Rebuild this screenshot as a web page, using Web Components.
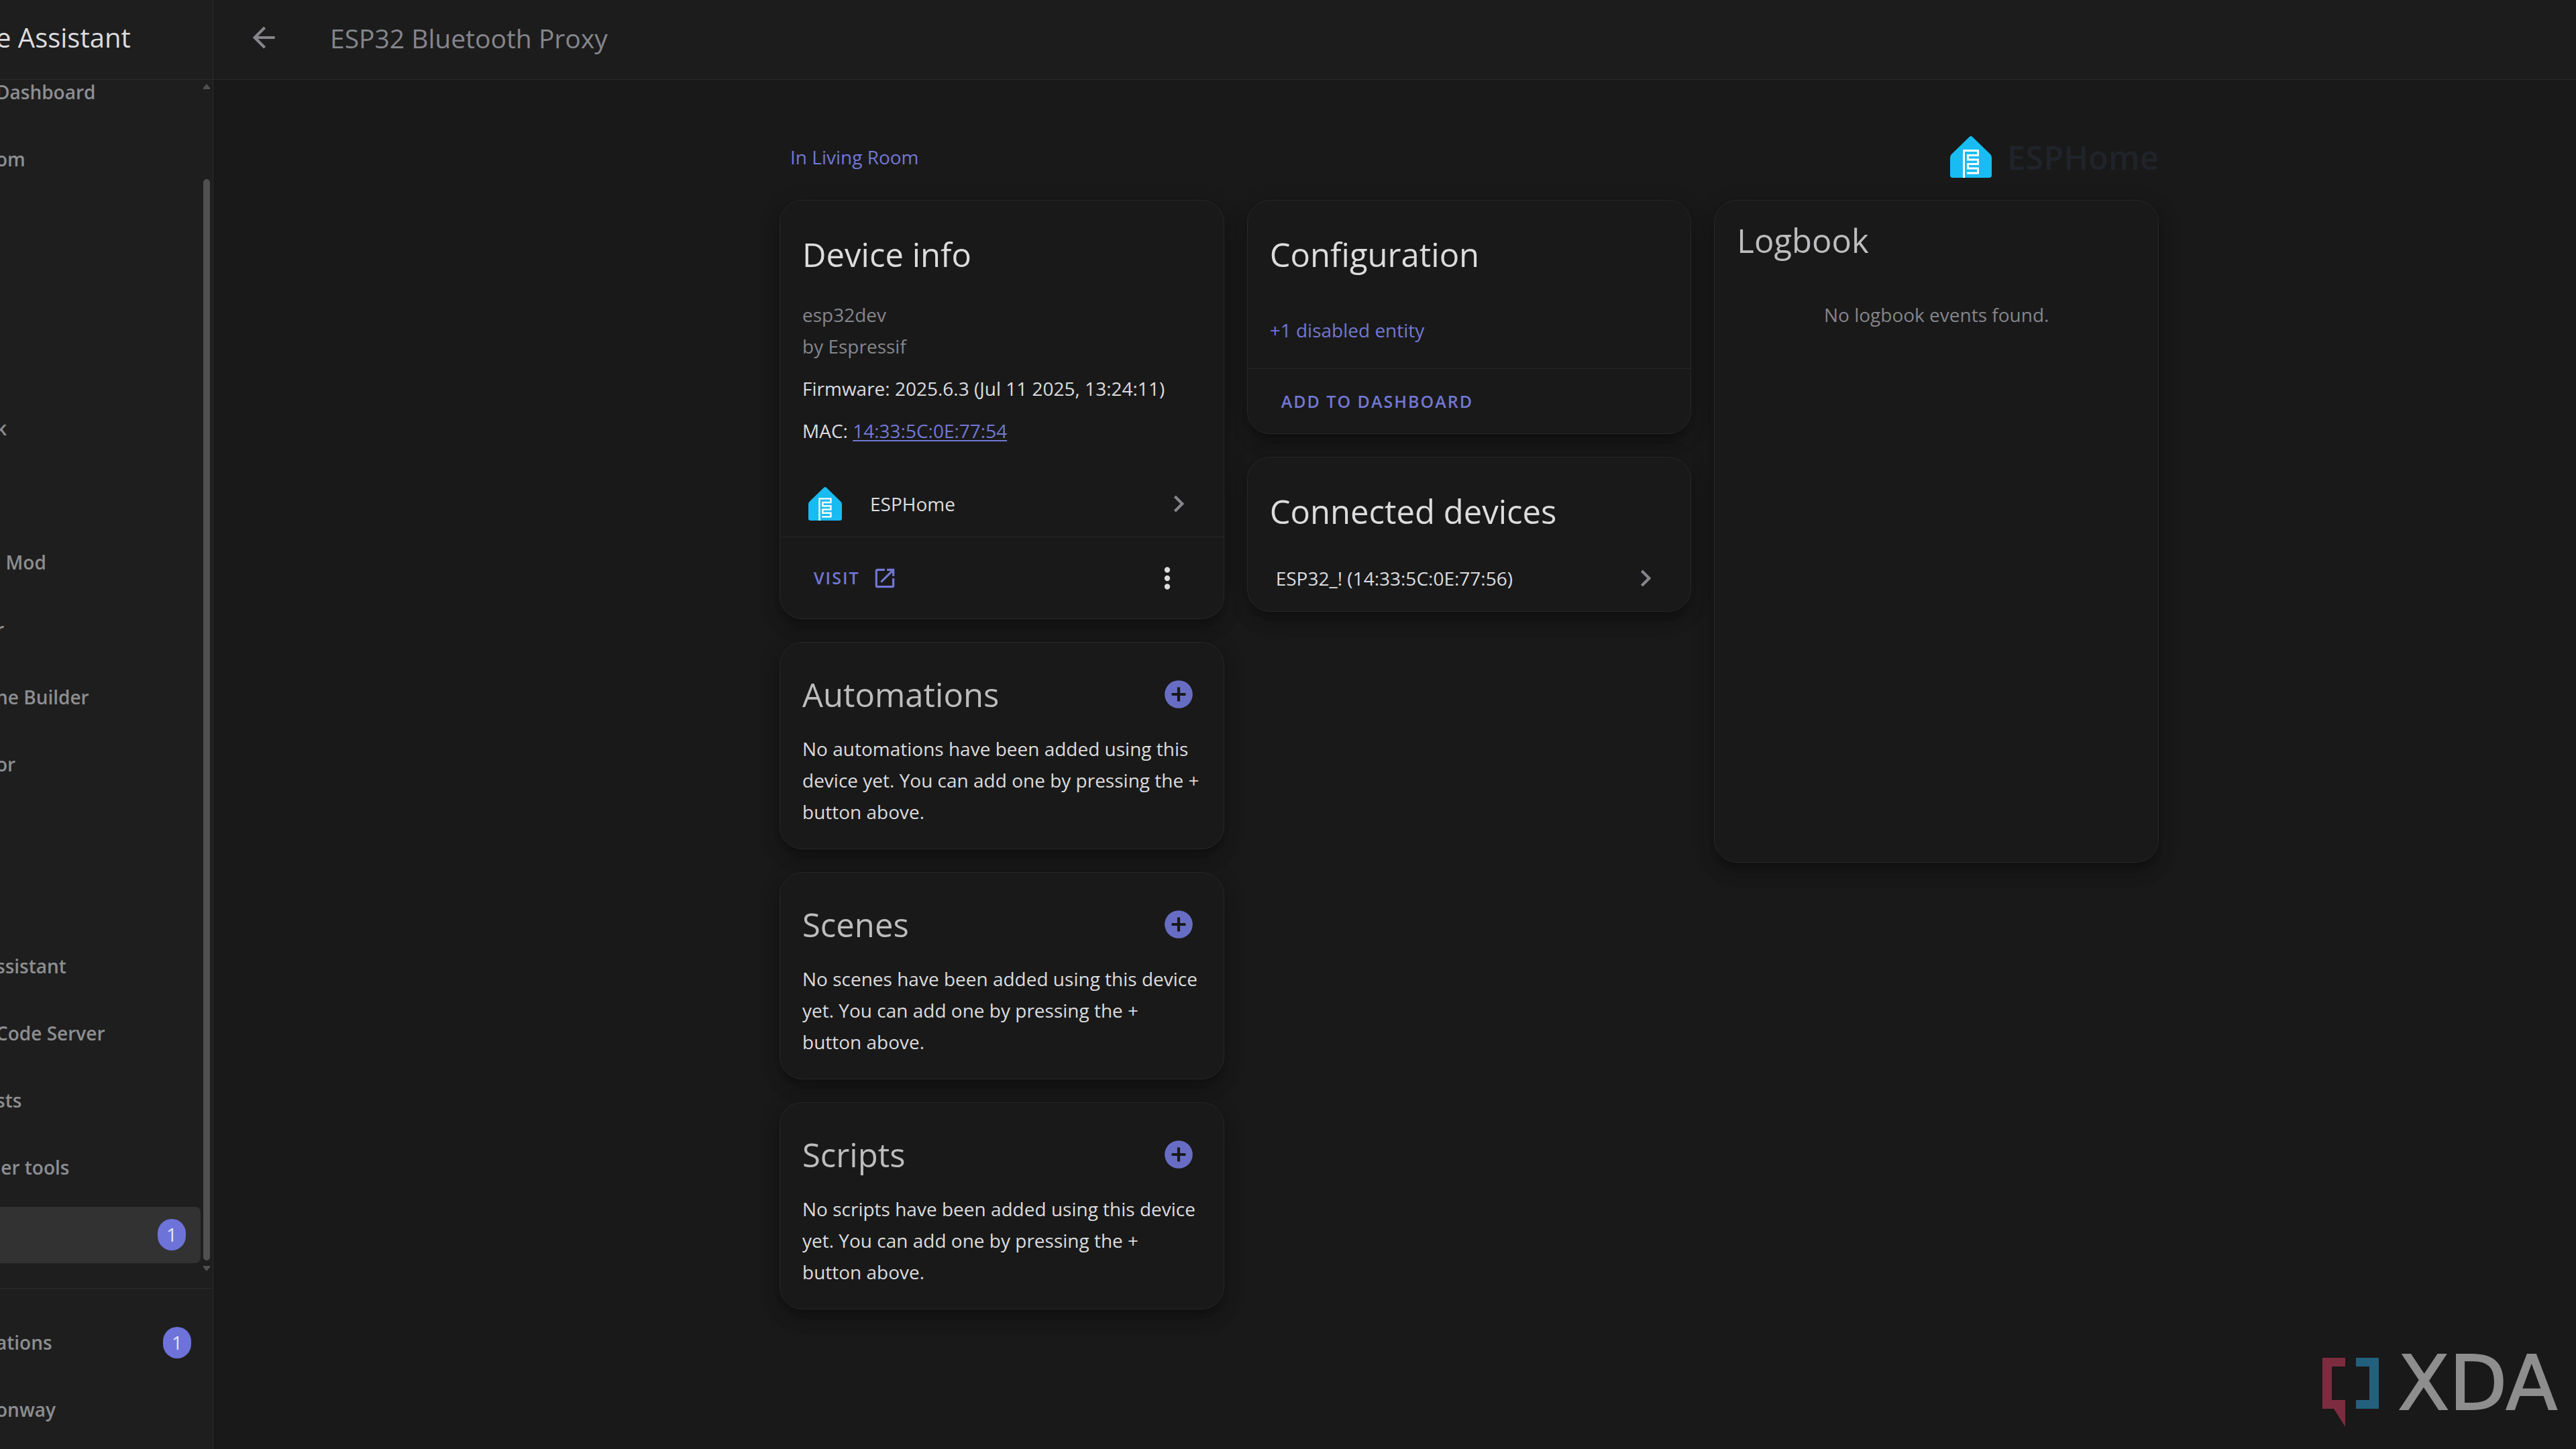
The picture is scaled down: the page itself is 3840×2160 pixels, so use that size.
<!DOCTYPE html>
<html lang="en">
<head>
<meta charset="utf-8">
<title>ESP32 Bluetooth Proxy</title>
<style>
  html, body {
    height: 100%;
    margin: 0;
  }
  body {
    --primary: #7277d4;
    --primary-text: #dcdcde;
    --secondary-text: #85858b;
    --divider: #2a2a2a;
    --card-border: #272727;
    background: #191919;
    color: var(--primary-text);
    font: 28px/47px "Open Sans", "Noto Sans", sans-serif;
  }
</style>
</head>
<body>
<ha-app></ha-app>

<script>
const icons = {
  back: 'M20,11V13H8L13.5,18.5L12.08,19.92L4.16,12L12.08,4.08L13.5,5.5L8,11H20Z',
  chevron: 'M8.59,16.58L13.17,12L8.59,7.41L10,6L16,12L10,18L8.59,16.58Z',
  open: 'M14,3V5H17.59L7.76,14.83L9.17,16.24L19,6.41V10H21V3M19,19H5V5H12V3H5C3.89,3 3,3.9 3,5V19A2,2 0 0,0 5,21H19A2,2 0 0,0 21,19V12H19V19Z',
  dots: 'M12,16A2,2 0 0,1 14,18A2,2 0 0,1 12,20A2,2 0 0,1 10,18A2,2 0 0,1 12,16M12,10A2,2 0 0,1 14,12A2,2 0 0,1 12,14A2,2 0 0,1 10,12A2,2 0 0,1 12,10M12,4A2,2 0 0,1 14,6A2,2 0 0,1 12,8A2,2 0 0,1 10,6A2,2 0 0,1 12,4Z',
  plus: 'M17,13H13V17H11V13H7V11H11V7H13V11H17M12,2A10,10 0 0,0 2,12A10,10 0 0,0 12,22A10,10 0 0,0 22,12A10,10 0 0,0 12,2Z',
}

class BaseElement extends HTMLElement {
  connectedCallback () {
    if (this.shadowRoot) {
      return
    }
    this.attachShadow({ mode: 'open' })
    const template = document.createElement('template')
    template.innerHTML = `<style>* { box-sizing: border-box; } a { color: inherit; text-decoration: none; }</style>${this.render()}`
    this.shadowRoot.appendChild(template.content.cloneNode(true))
  }
}

class HaIcon extends BaseElement {
  render () {
    return `
      <style>
        :host { display: block; width: 50px; height: 50px; flex: none; }
        svg { display: block; width: 100%; height: 100%; fill: currentColor; }
      </style>
      <svg viewBox="0 0 24 24" aria-hidden="true"><path d="${icons[this.getAttribute('name')]}"/></svg>
    `
  }
}

class EsphomeLogo extends BaseElement {
  render () {
    return `
      <style>
        :host { display: block; width: 62px; height: 62px; flex: none; }
        svg { display: block; width: 100%; height: 100%; }
      </style>
      <svg viewBox="0 0 62 62" aria-hidden="true">
        <path fill="#18bcf2" d="M28.5 1.2Q31 -1 33.5 1.2L60 27Q62 29 62 32V58Q62 62 58 62H4Q0 62 0 58V32Q0 29 2 27Z"/>
        <path fill="none" stroke="#fff" stroke-width="3" d="M20.5 62V21.5H41.5V28.5H26.5V35H41.5V41.5H26.5V48H41.5V55H25"/>
      </svg>
    `
  }
}

class HaBadge extends BaseElement {
  render () {
    return `
      <style>
        :host {
          display: grid;
          place-items: center;
          width: 42px;
          height: 47px;
          border-radius: 21px;
          background: #6d73d9;
          color: #e3e3fa;
          font-weight: 400;
        }
      </style>
      <span><slot></slot></span>
    `
  }
}

class NavItem extends BaseElement {
  render () {
    return `
      <style>
        :host { display: block; }
        a {
          display: flex;
          align-items: center;
          justify-content: space-between;
          height: 84px;
          padding-right: 22px;
          color: #8d8e91;
          font-weight: 600;
        }
        .label { white-space: pre; }
        :host([selected]) a { background: #323232; border-radius: 0 8px 8px 0; }
      </style>
      <a href="#"><span class="label">${this.getAttribute('label') || ''}</span><slot></slot></a>
    `
  }
}

class HaSidebar extends BaseElement {
  render () {
    const labels = ['Dashboard', 'om', '', '', '', 'k', '', '  Mod', 'r', 'ne Builder', 'or', '', '', 'ssistant', 'Code Server', 'sts', ' er tools']
    return `
      <style>
        :host {
          display: flex;
          flex-direction: column;
          flex: none;
          width: 324px;
          margin-left: -6px;
          background: #1e1e1e;
          border-right: 1px solid var(--divider);
          box-sizing: content-box;
        }
        .title {
          height: 119px;
          line-height: 112px;
          border-bottom: 1px solid var(--divider);
          font-size: 40px;
          white-space: nowrap;
        }
        .body { flex: 1; display: flex; gap: 4px; min-height: 0; overflow: hidden; }
        nav {
          flex: 1;
          display: flex;
          flex-direction: column;
          justify-content: space-between;
          margin-top: -24px;
          padding-bottom: 37px;
        }
        .scrollbar {
          display: flex;
          flex-direction: column;
          width: 10px;
          margin-right: 4px;
          padding: 6px 0 25px;
        }
        .scrollbar svg { display: block; width: 10px; height: 8px; fill: #505050; }
        .thumb { flex: 1; margin: 134px 0 8px; border-radius: 5px; background: #505050; }
        .footer {
          display: flex;
          flex-direction: column;
          gap: 16px;
          height: 240px;
          padding: 38px 10px 0 0;
          border-top: 1px solid var(--divider);
        }
      </style>
      <div class="title">e Assistant</div>
      <div class="body">
        <nav>
          ${labels.map(label => `<nav-item label="${label}"></nav-item>`).join('')}
          <nav-item selected><ha-badge>1</ha-badge></nav-item>
        </nav>
        <div class="scrollbar">
          <svg viewBox="0 0 10 8"><path d="M5 0L10 6V8H0V6Z"/></svg>
          <div class="thumb"></div>
          <svg viewBox="0 0 10 8"><path d="M5 8L10 2V0H0V2Z"/></svg>
        </div>
      </div>
      <div class="footer">
        <nav-item label="ations"><ha-badge>1</ha-badge></nav-item>
        <nav-item label="onway"></nav-item>
      </div>
    `
  }
}

class HaToolbar extends BaseElement {
  render () {
    return `
      <style>
        :host {
          display: flex;
          align-items: center;
          gap: 74px;
          height: 119px;
          box-sizing: border-box;
          padding: 0 50px 6px;
          background: #1c1c1c;
          border-bottom: 1px solid var(--divider);
          color: var(--secondary-text);
        }
        button { padding: 0; border: 0; background: none; color: inherit; }
        h1 { margin: 0; font-size: 39px; font-weight: 400; }
      </style>
      <button aria-label="Back"><ha-icon name="back"></ha-icon></button>
      <h1><slot></slot></h1>
    `
  }
}

class HaCard extends BaseElement {
  render () {
    return `
      <style>
        :host {
          display: block;
          background: #191919;
          border: 1px solid var(--card-border);
          border-radius: 34px;
          box-shadow: 0 17px 21px 2px rgba(0, 0, 0, .14), 0 6px 30px 4px rgba(0, 0, 0, .12), 0 10px 10px -6px rgba(0, 0, 0, .2);
        }
        header {
          display: flex;
          align-items: center;
          justify-content: space-between;
          padding: 48px 42px 0 33px;
        }
        h2 { margin: 0; font-size: 49px; line-height: 64px; font-weight: 400; }
        :host([variant]) h2 { color: #bdbdbf; }
        :host([variant="related"]) header { padding-top: 45px; }
        :host([variant="logbook"]) header { padding-top: 27px; }
        ::slotted([slot="action"]) { display: block; padding: 0; border: 0; background: none; color: #686dc4; }
      </style>
      <header><h2>${this.getAttribute('heading')}</h2><slot name="action"></slot></header>
      <slot></slot>
    `
  }
}

class RelatedCard extends BaseElement {
  render () {
    const kind = this.getAttribute('kind')
    return `
      <style>
        :host { display: block; }
        p { margin: 0; padding: 26px 33px 31px 33px; }
      </style>
      <ha-card heading="${kind}" variant="related">
        <button slot="action" aria-label="Add to ${kind}"><ha-icon name="plus"></ha-icon></button>
        <p>No ${kind.toLowerCase()} have been added using this device yet. You can add one by pressing the + button above.</p>
      </ha-card>
    `
  }
}

class CardRow extends BaseElement {
  render () {
    return `
      <style>
        :host { display: block; }
        a { display: flex; align-items: center; gap: 42px; height: 98px; padding: 0 42px; }
        ha-icon { margin-left: auto; color: var(--secondary-text); }
        ::slotted(esphome-logo) { width: 50px; height: 50px; }
      </style>
      <a href="#"><slot name="icon"></slot><slot></slot><ha-icon name="chevron"></ha-icon></a>
    `
  }
}

class DevicePage extends BaseElement {
  render () {
    return `
      <style>
        :host { display: block; padding: 81px 0 80px 222px; }
        .container { max-width: 2056px; margin: 0 auto; }
        .top {
          display: flex;
          align-items: center;
          justify-content: space-between;
          height: 68px;
          margin-bottom: 30px;
          padding-left: 16px;
        }
        .link { color: var(--primary); }
        .brand { display: flex; align-items: center; gap: 23px; color: #20242a; font-size: 49px; font-weight: 600; }
        .columns { display: grid; grid-template-columns: repeat(3, 1fr); gap: 34px; align-items: start; }
        .column { display: grid; gap: 34px; }
        .info { display: grid; gap: 16px; padding: 35px 33px 36px; }
        .model { color: var(--secondary-text); }
        .mac { color: var(--primary); text-decoration: underline; text-underline-offset: 3px; }
        .entities { padding: 58px 33px 33px; }
        .devices { padding-top: 19px; }
        .actions {
          display: flex;
          align-items: center;
          justify-content: space-between;
          height: 97px;
          padding: 0 59px 0 50px;
          border-top: 1px solid var(--card-border);
        }
        .actions.tall { height: 122px; }
        .action {
          display: flex;
          align-items: center;
          gap: 18px;
          padding: 0;
          border: 0;
          background: none;
          color: var(--primary);
          font: inherit;
          font-size: 25px;
          font-weight: 600;
          letter-spacing: 2px;
        }
        .action ha-icon { width: 38px; height: 38px; }
        .menu { padding: 0; border: 0; background: none; color: var(--primary-text); }
        .log { min-height: 895px; padding-top: 56px; color: var(--secondary-text); text-align: center; }
      </style>
      <div class="container">
        <div class="top">
          <a class="link" href="#">In Living Room</a>
          <div class="brand"><esphome-logo></esphome-logo>ESPHome</div>
        </div>
        <div class="columns">
          <div class="column">
            <ha-card heading="Device info">
              <div class="info">
                <div class="model">esp32dev<br>by Espressif</div>
                <div>Firmware: 2025.6.3 (Jul 11 2025, 13:24:11)</div>
                <div>MAC: <a class="mac" href="#">14:33:5C:0E:77:54</a></div>
              </div>
              <card-row><esphome-logo slot="icon"></esphome-logo>ESPHome</card-row>
              <div class="actions tall">
                <a class="action" href="#">VISIT<ha-icon name="open"></ha-icon></a>
                <button class="menu" aria-label="Menu"><ha-icon name="dots"></ha-icon></button>
              </div>
            </ha-card>
            <related-card kind="Automations"></related-card>
            <related-card kind="Scenes"></related-card>
            <related-card kind="Scripts"></related-card>
          </div>
          <div class="column">
            <ha-card heading="Configuration">
              <div class="entities"><a class="link" href="#">+1 disabled entity</a></div>
              <div class="actions"><button class="action">ADD TO DASHBOARD</button></div>
            </ha-card>
            <ha-card heading="Connected devices">
              <div class="devices"><card-row>ESP32_! (14:33:5C:0E:77:56)</card-row></div>
            </ha-card>
          </div>
          <div class="column">
            <ha-card heading="Logbook" variant="logbook">
              <div class="log">No logbook events found.</div>
            </ha-card>
          </div>
        </div>
      </div>
    `
  }
}

class XdaMark extends BaseElement {
  render () {
    return `
      <style>
        :host {
          position: fixed;
          right: 28px;
          bottom: 33px;
          display: flex;
          align-items: flex-start;
          gap: 28px;
          color: #8e8e8e;
          font: 112px/77px "DejaVu Sans", sans-serif;
          -webkit-text-stroke: 2px currentColor;
        }
        svg { display: block; width: 84px; height: 103px; }
      </style>
      <svg viewBox="0 0 84 103" aria-hidden="true">
        <path fill="#7d2c3f" d="M0 0H34V13H14V63H34V103L17 76H0Z"/>
        <path fill="#23607d" d="M50 0H84V76H50V63H70V13H50Z"/>
      </svg>
      <span>XDA</span>
    `
  }
}

class HaApp extends BaseElement {
  render () {
    return `
      <style>
        :host { display: flex; min-height: 100%; }
        main { flex: 1; min-width: 0; }
      </style>
      <ha-sidebar></ha-sidebar>
      <main>
        <ha-toolbar>ESP32 Bluetooth Proxy</ha-toolbar>
        <device-page></device-page>
      </main>
      <xda-mark></xda-mark>
    `
  }
}

window.customElements.define('ha-icon', HaIcon)
window.customElements.define('esphome-logo', EsphomeLogo)
window.customElements.define('ha-badge', HaBadge)
window.customElements.define('nav-item', NavItem)
window.customElements.define('ha-sidebar', HaSidebar)
window.customElements.define('ha-toolbar', HaToolbar)
window.customElements.define('ha-card', HaCard)
window.customElements.define('related-card', RelatedCard)
window.customElements.define('card-row', CardRow)
window.customElements.define('device-page', DevicePage)
window.customElements.define('xda-mark', XdaMark)
window.customElements.define('ha-app', HaApp)
</script>
</body>
</html>
